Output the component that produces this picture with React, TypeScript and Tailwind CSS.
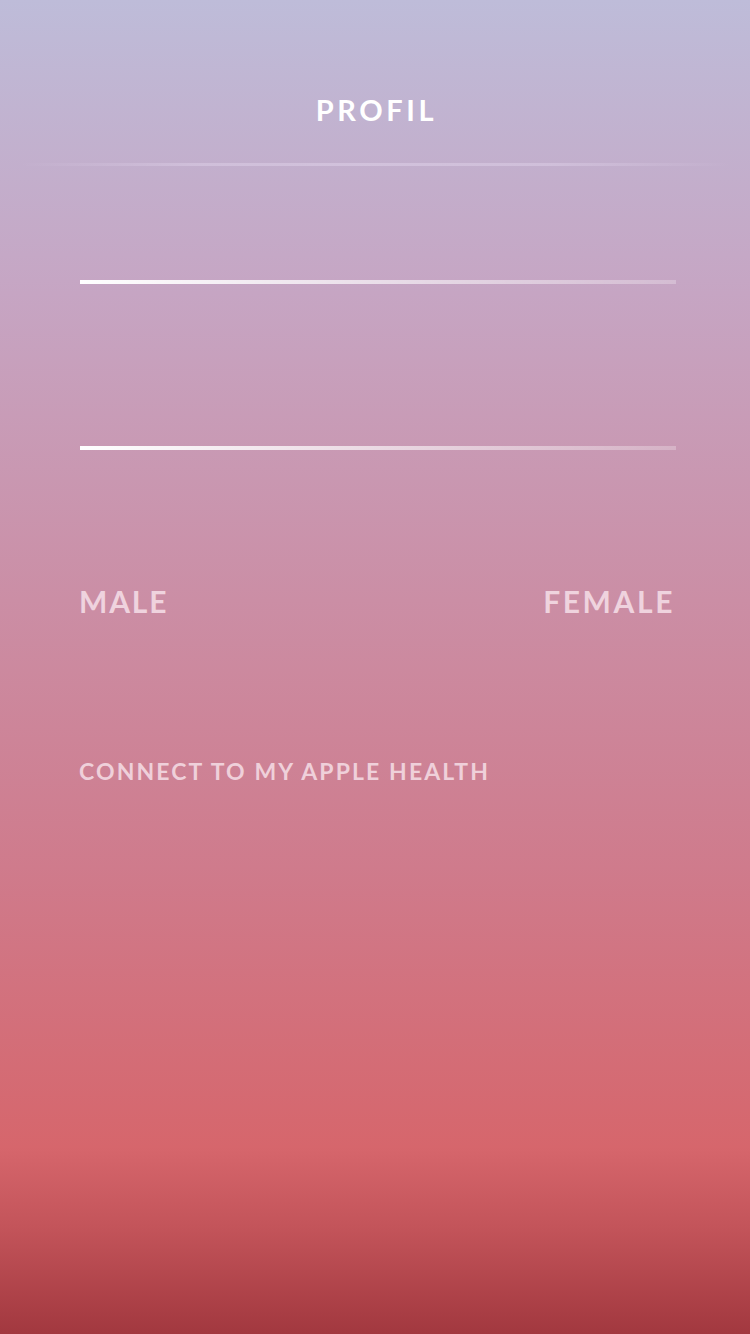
export default function App() {
  return (
    <div className="flex h-[1334px] w-[750px] flex-col bg-[linear-gradient(180deg,#bebcd9_0%,#c6a5c3_22%,#cb8ea5_45%,#cf7b8c_65%,#d6666c_86%,#c3545a_92%,#a2383f_100%)] font-['Lato',sans-serif]">
      <header className="flex flex-col items-center pt-[93px]">
        <h1 className="pl-[3px] text-[29px] font-bold leading-[34px] tracking-[3.6px] text-white">PROFIL</h1>
        <div className="mt-[36px] h-[3px] w-[710px] bg-[linear-gradient(90deg,rgba(255,255,255,0)_0%,rgba(215,200,225,0.65)_25%,rgba(215,200,225,0.75)_50%,rgba(215,200,225,0.65)_75%,rgba(255,255,255,0)_100%)]" />
      </header>

      <div className="flex flex-col px-[80px]">
        <div className="mt-[114px] h-[4px] w-[596px] bg-[linear-gradient(90deg,#ffffff_0%,rgba(255,255,255,0.7)_40%,rgba(255,255,255,0.25)_100%)]" />
        <div className="mt-[162px] h-[4px] w-[596px] bg-[linear-gradient(90deg,#ffffff_0%,rgba(255,255,255,0.7)_40%,rgba(255,255,255,0.25)_100%)]" />

        <div className="mt-[133px] -ml-[1px] flex items-center justify-between">
          <span className="text-[30px] font-bold leading-[36px] tracking-[1.8px] text-[#efd3de]">MALE</span>
          <span className="-mr-[5px] text-[30px] font-bold leading-[36px] tracking-[2.6px] text-[#efd3de]">FEMALE</span>
        </div>

        <div className="-ml-[1px] mt-[138px] text-[23px] font-bold leading-[28px] tracking-[2.1px] text-[#efd0da]">
          CONNECT TO MY APPLE HEALTH
        </div>
      </div>
    </div>
  );
}
